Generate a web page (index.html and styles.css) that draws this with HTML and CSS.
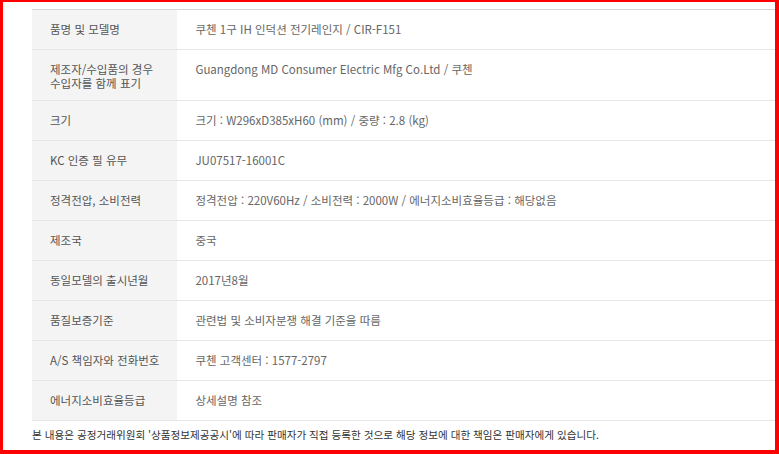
FILE: index.html
```html
<!DOCTYPE html>
<html lang="ko">
<head>
    <meta charset="UTF-8">
    <meta name="viewport" content="width=device-width, initial-scale=1.0">
    <title>상품정보제공고시</title>
    <link rel="stylesheet" href="styles.css">
</head>
<body>
    <div class="frame">
        <table class="info">
            <tr><th>품명 및 모델명</th><td>쿠첸 1구 IH 인덕션 전기레인지 / CIR-F151</td></tr>
            <tr class="two-line"><th>제조자/수입품의 경우<br>수입자를 함께 표기</th><td>Guangdong MD Consumer Electric Mfg Co.Ltd / 쿠첸</td></tr>
            <tr><th>크기</th><td>크기 : W296xD385xH60 (mm) / 중량 : 2.8 (kg)</td></tr>
            <tr><th>KC 인증 필 유무</th><td>JU07517-16001C</td></tr>
            <tr><th>정격전압, 소비전력</th><td>정격전압 : 220V60Hz / 소비전력 : 2000W / 에너지소비효율등급 : 해당없음</td></tr>
            <tr><th>제조국</th><td>중국</td></tr>
            <tr><th>동일모델의 출시년월</th><td>2017년8월</td></tr>
            <tr><th>품질보증기준</th><td>관련법 및 소비자분쟁 해결 기준을 따름</td></tr>
            <tr><th>A/S 책임자와 전화번호</th><td>쿠첸 고객센터 : 1577-2797</td></tr>
            <tr><th>에너지소비효율등급</th><td>상세설명 참조</td></tr>
        </table>
        <p class="notice">본 내용은 공정거래위원회 '상품정보제공공시'에 따라 판매자가 직접 등록한 것으로 해당 정보에 대한 책임은 판매자에게 있습니다.</p>
    </div>
</body>
</html>
```

FILE: styles.css
```css
html, body {
    margin: 0;
    padding: 0;
    background: #fff;
}
body {
    font-family: "Noto Sans CJK KR", "Noto Sans", sans-serif;
}
.frame {
    width: 779px;
    height: 454px;
    box-sizing: border-box;
    border-style: solid;
    border-color: #ff0000;
    border-width: 2px 4px 4px 3px;
    padding: 7px 0 0 29px;
    overflow: hidden;
}
.info {
    width: 100%;
    border-collapse: collapse;
    border-top: 1px solid #d4d4d4;
    font-size: 11.5px;
    line-height: 12px;
}
.info th,
.info td {
    height: 12px;
    padding: 13px 18px 14px;
    text-align: left;
    vertical-align: top;
    border-bottom: 1px solid #e6e6e6;
    font-weight: normal;
}
.info .two-line th,
.info .two-line td {
    line-height: 14px;
    padding: 12px 18px 10px;
}
.info th {
    width: 109px;
    background: #f4f4f4;
    color: #555;
    white-space: nowrap;
}
.info td {
    color: #666;
}
.notice {
    margin: 7px 0 0;
    font-size: 10.6px;
    line-height: 14px;
    color: #333;
}
```
